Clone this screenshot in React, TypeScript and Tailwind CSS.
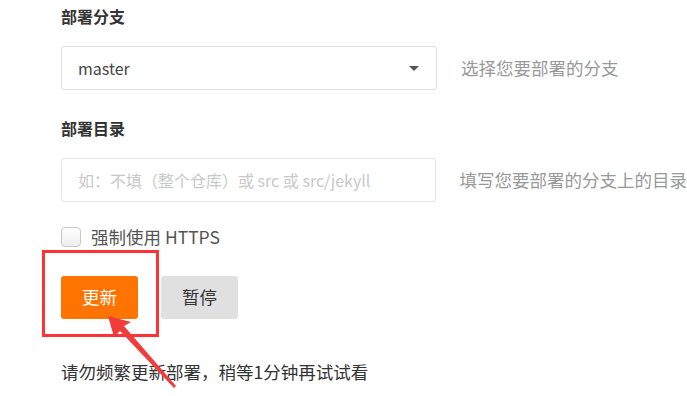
import React from "react";

export default function App() {
  const font = { fontFamily: '"Microsoft YaHei", "Noto Sans CJK SC", "Noto Sans", sans-serif' };
  return (
    <div className="relative w-[687px] h-[396px] overflow-hidden bg-white" style={font}>
      <div className="flex flex-col pl-[61px] pt-[4px]">
        <div className="text-[16px] leading-[24px] font-bold text-[#333]">部署分支</div>
        <div className="mt-[18px] flex items-center">
          <div className="w-[376px] h-[44px] border border-[#dcdfe6] rounded-[3px] flex items-center justify-between pl-[16px] pr-[17px]">
            <span className="text-[16px] text-[#444]">master</span>
            <span className="w-0 h-0 border-l-[5px] border-r-[5px] border-t-[5px] border-l-transparent border-r-transparent border-t-[#555]" />
          </div>
          <span className="ml-[24px] text-[17.5px] text-[#999] whitespace-nowrap">选择您要部署的分支</span>
        </div>
        <div className="mt-[26px] text-[16px] leading-[24px] font-bold text-[#333]">部署目录</div>
        <div className="mt-[18px] flex items-center">
          <div className="w-[376px] h-[44px] border border-[#e3e3e8] rounded-[3px] flex items-center pl-[16px]">
            <span className="text-[16px] text-[#c8c8c8] whitespace-nowrap">如：不填（整个仓库）或 src 或 src/jekyll</span>
          </div>
          <span className="ml-[24px] text-[17.5px] text-[#999] whitespace-nowrap">填写您要部署的分支上的目录</span>
        </div>
        <div className="mt-[23px] flex items-center h-[24px]">
          <span className="w-[20px] h-[20px] rounded-[4px] border border-[#c8c8c8] bg-gradient-to-b from-white to-[#eeeeee]" />
          <span className="ml-[10px] text-[17.5px] text-[#555] whitespace-nowrap">强制使用 HTTPS</span>
        </div>
        <div className="mt-[27px] flex items-center gap-[23px]">
          <div className="w-[77px] h-[43px] rounded-[3px] bg-[#ff7400] text-white text-[17.5px] flex items-center justify-center">更新</div>
          <div className="w-[77px] h-[43px] rounded-[3px] bg-[#e0e0e0] text-[#333] text-[17.5px] flex items-center justify-center">暂停</div>
        </div>
        <div className="mt-[41px] text-[17.5px] leading-[24px] text-[#333] whitespace-nowrap">请勿频繁更新部署，稍等1分钟再试试看</div>
      </div>

      <div className="absolute left-[42px] top-[250px] w-[117px] h-[87px] border-[3px] border-[#ff3333]" />

      <svg className="absolute left-0 top-0" width="687" height="396" viewBox="0 0 687 396">
        <polygon points="108,316 131,322 124,326 176,386 174,388 120,331 114,337" fill="#f23c3c" />
      </svg>
    </div>
  );
}
